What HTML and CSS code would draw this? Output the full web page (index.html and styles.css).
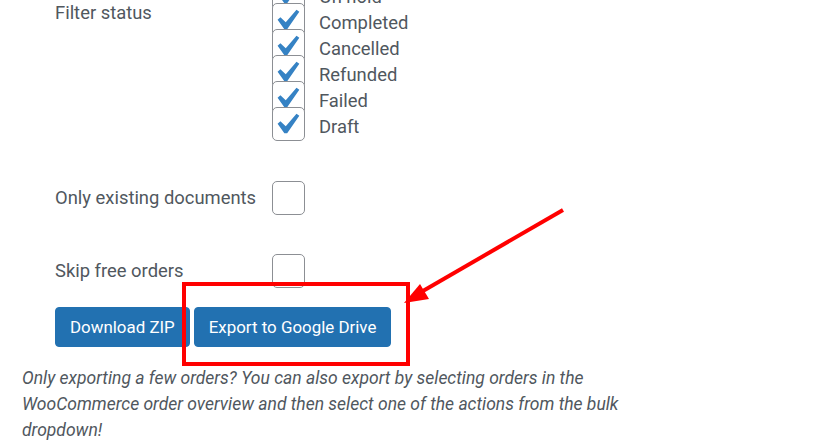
FILE: index.html
```html
<!DOCTYPE html>
<html>
<head>
<meta charset="utf-8">
<link rel="stylesheet" href="styles.css">
</head>
<body>
<div class="page">
  <div class="form">
    <div class="field filter">
      <div class="label">Filter status</div>
      <ul class="status-list">
        <li><span class="cb checked"><svg viewBox="5.5 4.6 11 9.9"><path d="M14.83 4.89l1.34.94-5.81 8.38H9.02L5.78 9.67l1.34-1.25 2.57 2.4z"/></svg></span><span>On hold</span></li>
        <li><span class="cb checked"><svg viewBox="5.5 4.6 11 9.9"><path d="M14.83 4.89l1.34.94-5.81 8.38H9.02L5.78 9.67l1.34-1.25 2.57 2.4z"/></svg></span><span>Completed</span></li>
        <li><span class="cb checked"><svg viewBox="5.5 4.6 11 9.9"><path d="M14.83 4.89l1.34.94-5.81 8.38H9.02L5.78 9.67l1.34-1.25 2.57 2.4z"/></svg></span><span>Cancelled</span></li>
        <li><span class="cb checked"><svg viewBox="5.5 4.6 11 9.9"><path d="M14.83 4.89l1.34.94-5.81 8.38H9.02L5.78 9.67l1.34-1.25 2.57 2.4z"/></svg></span><span>Refunded</span></li>
        <li><span class="cb checked"><svg viewBox="5.5 4.6 11 9.9"><path d="M14.83 4.89l1.34.94-5.81 8.38H9.02L5.78 9.67l1.34-1.25 2.57 2.4z"/></svg></span><span>Failed</span></li>
        <li><span class="cb checked"><svg viewBox="5.5 4.6 11 9.9"><path d="M14.83 4.89l1.34.94-5.81 8.38H9.02L5.78 9.67l1.34-1.25 2.57 2.4z"/></svg></span><span>Draft</span></li>
      </ul>
    </div>
    <div class="field option first">
      <div class="label">Only existing documents</div>
      <span class="cb"></span>
    </div>
    <div class="field option second">
      <div class="label">Skip free orders</div>
      <span class="cb"></span>
    </div>
    <div class="actions">
      <button class="btn">Download ZIP</button>
      <button class="btn">Export to Google Drive</button>
    </div>
  </div>
  <p class="note">Only exporting a few orders? You can also export by selecting orders in the WooCommerce order overview and then select one of the actions from the bulk dropdown!</p>

  <div class="highlight"></div>
  <svg class="arrow" width="821" height="444" viewBox="0 0 821 444">
    <line x1="563" y1="210" x2="416" y2="295" stroke="#ff0000" stroke-width="4"/>
    <polygon points="404,303 420,284 429,299" fill="#ff0000"/>
  </svg>
</div>
</body>
</html>
```

FILE: styles.css
```css
* { box-sizing: border-box; }
html, body { margin: 0; padding: 0; background: #fff; }
body {
  font-family: Roboto, "Liberation Sans", sans-serif;
  color: #50575e;
  overflow: hidden;
}
.page {
  position: relative;
  width: 821px;
  height: 444px;
  overflow: hidden;
}
.form {
  padding-left: 55px;
}
.field {
  display: flex;
}
.label {
  width: 217px;
  flex: none;
  font-size: 18.4px;
  line-height: 26px;
  color: #50575e;
}
.status-list {
  list-style: none;
  margin: -23px 0 0 0;
  padding: 0;
}
.status-list li {
  display: flex;
  align-items: flex-start;
  height: 26px;
  font-size: 18.4px;
  line-height: 26px;
}
.status-list li span:last-child {
  margin-left: 14px;
  margin-top: 7px;
}
.cb {
  display: block;
  flex: none;
  width: 33px;
  height: 34px;
  border: 1px solid #8c8f94;
  border-radius: 5px;
  background: #fff;
}
.cb svg {
  display: block;
  width: 23px;
  height: 21px;
  margin: 5px 0 0 4px;
  fill: #3582c4;
}
.option {
  align-items: center;
  height: 34px;
}
.option .label { line-height: 34px; }
.first { margin-top: 48px; }
.second { margin-top: 39px; }
.actions {
  display: flex;
  gap: 4px;
  margin-top: 19px;
}
.btn {
  height: 40px;
  padding: 0 14px;
  background: #2271b1;
  border: 1px solid #2271b1;
  border-radius: 4px;
  color: #fff;
  font-family: Roboto, "Liberation Sans", sans-serif;
  font-size: 16.9px;
  line-height: 38px;
}
.note {
  margin: 18px 0 0 0;
  padding-left: 22px;
  width: 660px;
  font-size: 17.5px;
  line-height: 26px;
  font-style: italic;
  color: #50575e;
}
.highlight {
  position: absolute;
  left: 182px;
  top: 282px;
  width: 228px;
  height: 84px;
  border: 4px solid #ff0000;
}
.arrow {
  position: absolute;
  left: 0;
  top: 0;
}
```
